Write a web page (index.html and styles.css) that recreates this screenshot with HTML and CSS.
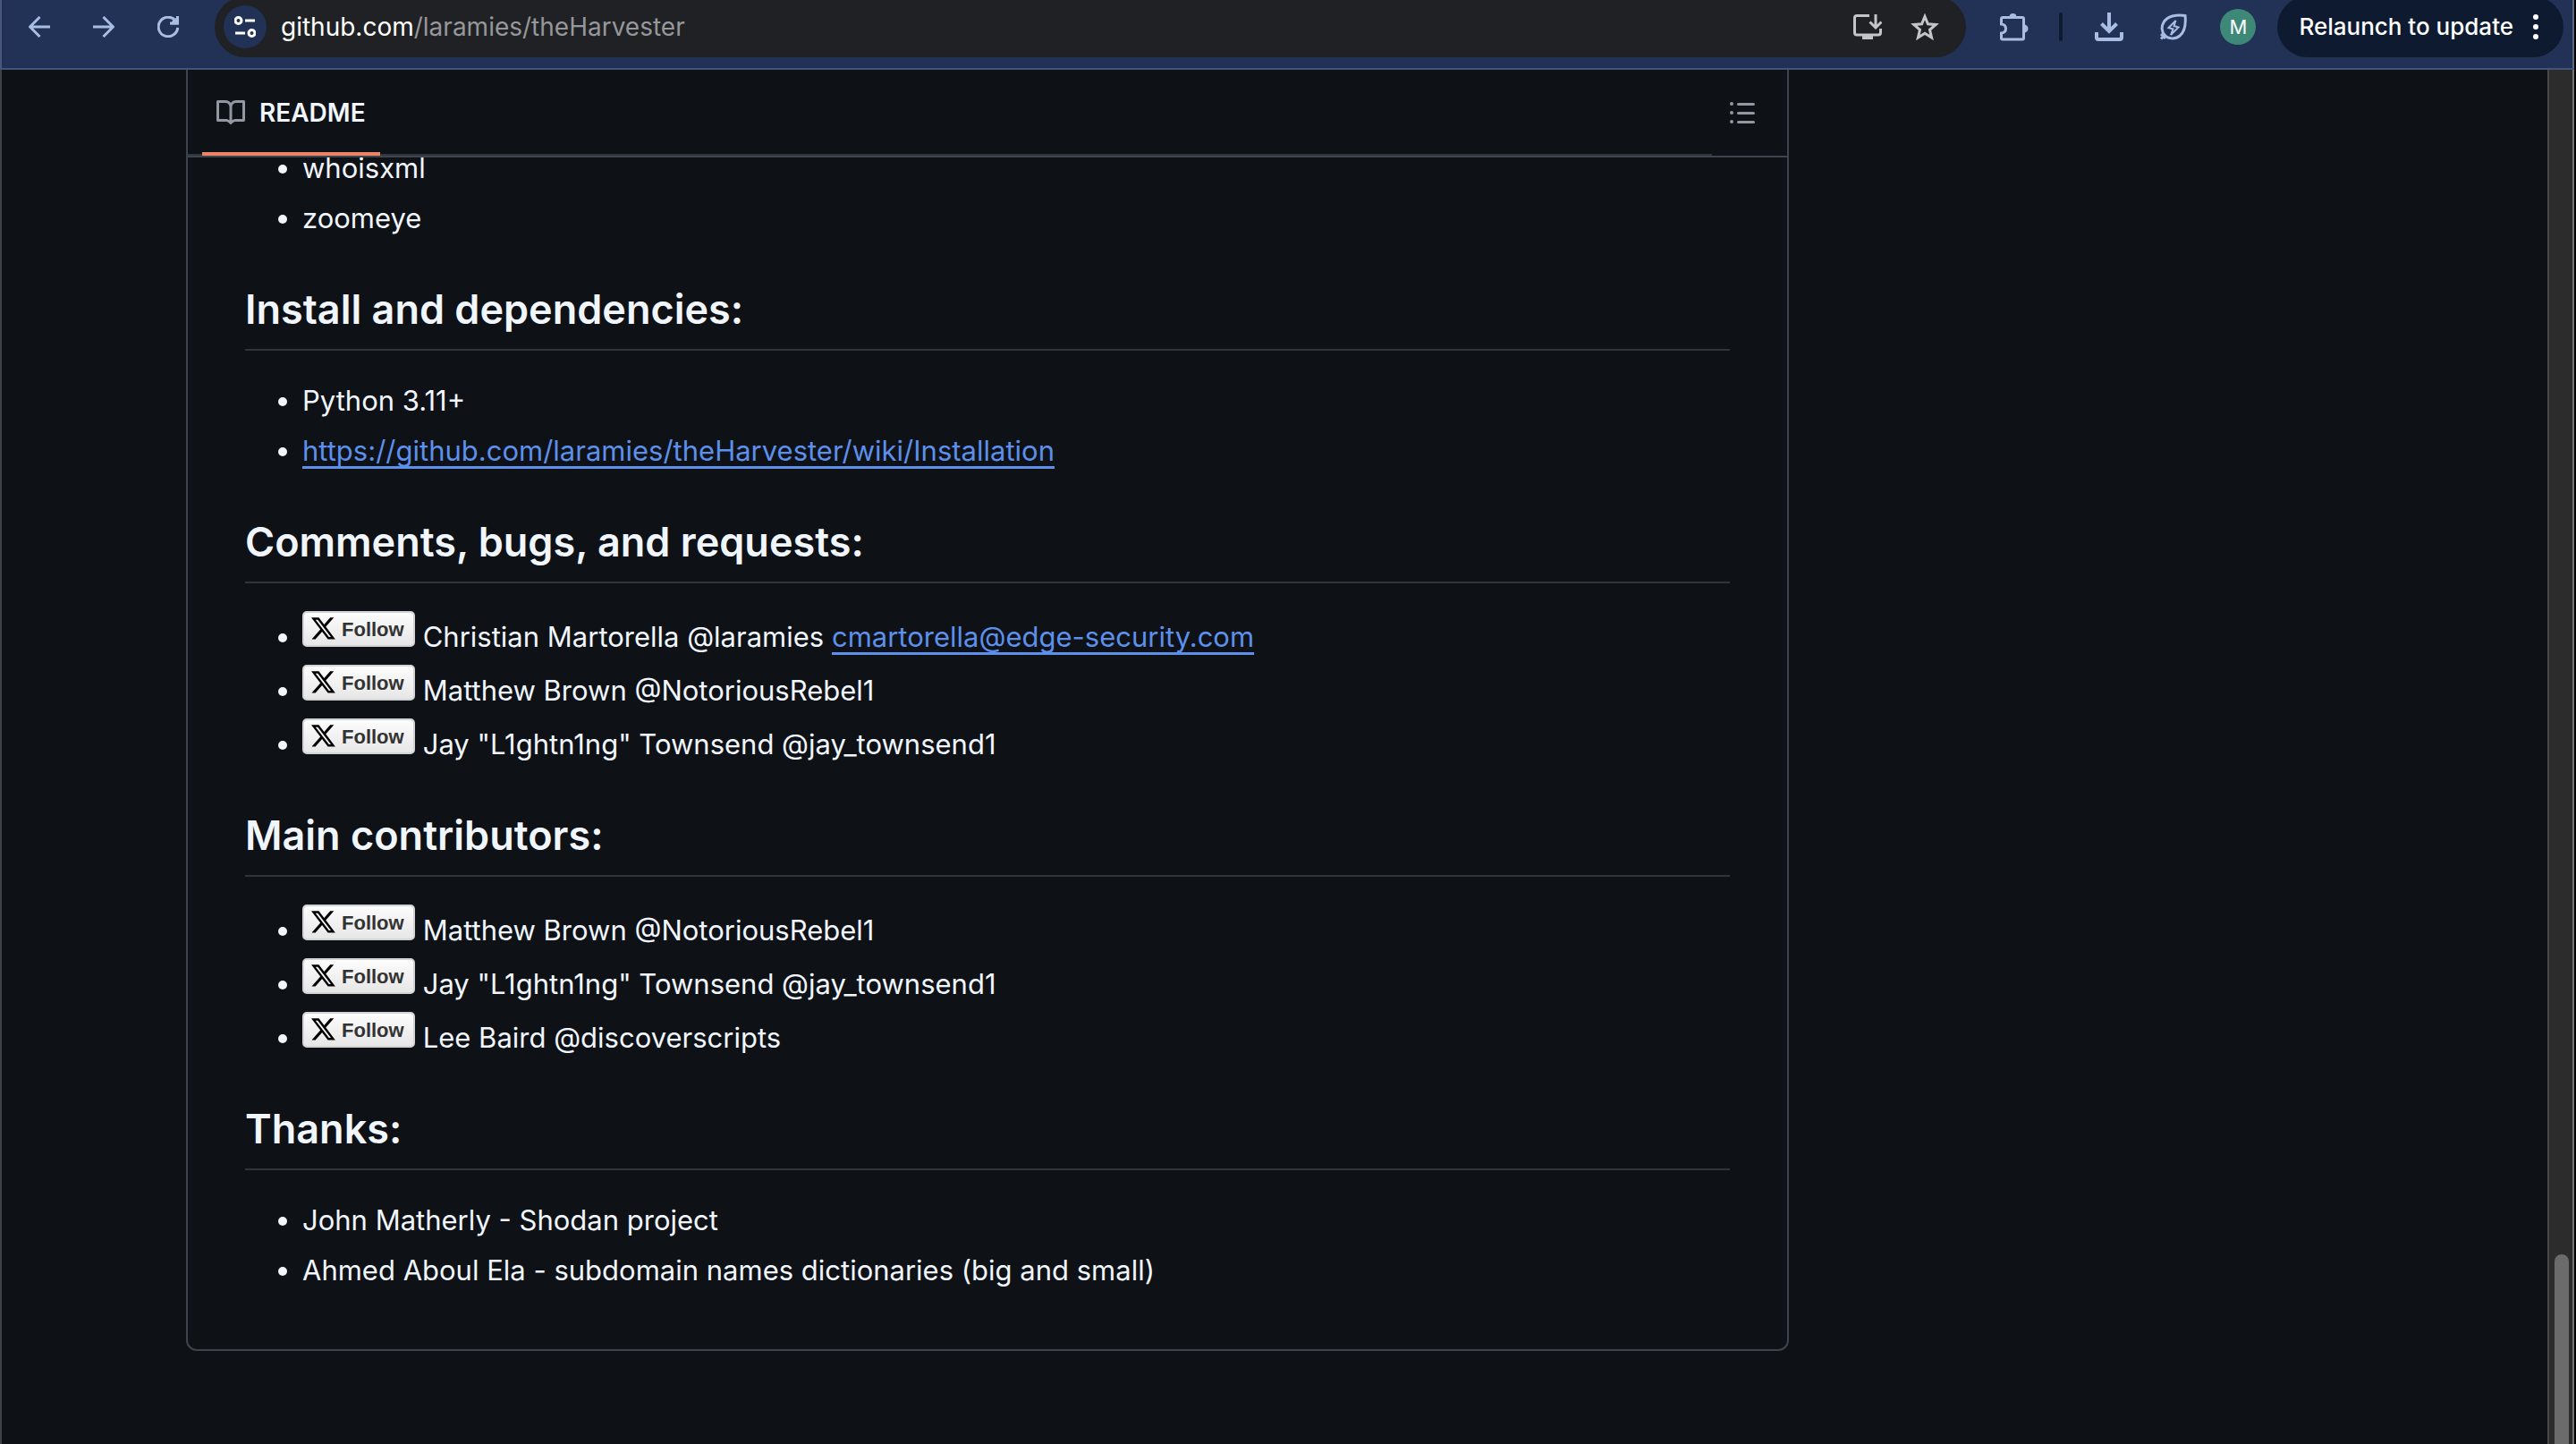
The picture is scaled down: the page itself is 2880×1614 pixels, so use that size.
FILE: index.html
```html
<!DOCTYPE html>
<html lang="en">
<head>
<meta charset="utf-8">
<title>laramies/theHarvester</title>
<link rel="stylesheet" href="styles.css">
</head>
<body>
<svg class="defs" aria-hidden="true">
  <defs>
    <linearGradient id="badge-fill" x1="0" y1="0" x2="0" y2="1">
      <stop offset="0" stop-color="#fdfdfd"/>
      <stop offset="1" stop-color="#e6e6e6"/>
    </linearGradient>
    <symbol id="follow" viewBox="0 0 126 40">
      <rect x="1" y="1" width="124" height="38" rx="4" fill="url(#badge-fill)" stroke="#d3d3d3" stroke-width="2"/>
      <path transform="translate(10 6) scale(1.12)" d="M18.901 1.153h3.68l-8.04 9.19L24 22.846h-7.406l-5.8-7.584-6.638 7.584H.474l8.6-9.83L0 1.154h7.594l5.243 6.932ZM17.61 20.644h2.039L6.486 3.24H4.298Z" fill="#000"/>
      <text x="44" y="28" class="badge-text">Follow</text>
    </symbol>
  </defs>
</svg>
<div class="window">
  <header class="toolbar">
    <nav class="history" aria-label="History">
      <button class="tool" aria-label="Back"><svg viewBox="0 0 24 24" width="24" height="24" class="line"><path d="M24 12H2M12.500 1 1.500 12l11 11"/></svg></button>
      <button class="tool" aria-label="Forward"><svg viewBox="0 0 24 24" width="24" height="24" class="line"><path d="M0 12h22M11.500 1l11 11-11 11"/></svg></button>
      <button class="tool" aria-label="Reload"><svg viewBox="0 0 24 24" width="24" height="24" class="line"><path d="M22.700 13A10.800 10.800 0 1 1 20 4.800L22.500 7.500M22.500 0v8h-8.500"/><path d="M18 6l4-3v5h-5z"/></svg></button>
    </nav>
    <div class="omnibox">
      <button class="site" aria-label="Site information"><svg viewBox="0 0 24 24" width="24" height="24" class="line"><circle cx="4.500" cy="5" r="3.500"/><path d="M12 5h11M1 19h11"/><circle cx="19.500" cy="19" r="3.500"/></svg></button>
      <span class="address"><label for="url">github.com</label><input id="url" type="text" value="/laramies/theHarvester"></span>
      <button class="tool grey" aria-label="Install app"><svg viewBox="0 0 32 32" width="32" height="32" class="line"><path d="M18 3.500H4q-2.500 0-2.500 2.500v16.500q0 2.500 2.500 2.500h24q2.500 0 2.500-2.500V18"/><path d="M10 24h12v6H10z" class="solid"/><path d="M25 2v14M18.500 10.500l6.500 6.500 6.500-6.500"/></svg></button>
      <button class="tool grey" aria-label="Bookmark"><svg viewBox="0 0 32 32" width="32" height="32" class="line"><path d="M16 4.500l3.400 8.300 8.900.7-6.800 5.800 2.100 8.700L16 23.300 8.400 28l2.100-8.700-6.800-5.800 8.900-.7z"/></svg></button>
    </div>
    <div class="actions">
      <button class="tool" aria-label="Extensions"><svg viewBox="0 0 32 32" width="32" height="32" class="line"><path d="M3.500 5.500h21.500q1.500 0 1.500 1.500v21.500q0 1.500-1.500 1.500H3q-1.500 0-1.500-1.500V23q5-.5 5-5t-5-5V7q0-1.500 2-1.500z"/><path d="M10.500 5a4 4 0 0 1 8 0zM27 13.500a4.500 4.500 0 0 1 0 9z" class="solid"/></svg></button>
      <span class="divider"></span>
      <button class="tool" aria-label="Downloads"><svg viewBox="0 0 32 32" width="32" height="32" class="line thick"><path d="M16 0v20M7.500 12.500l8.500 8.500 8.500-8.500"/><path d="M2 22v6q0 2 2 2h24q2 0 2-2v-6"/></svg></button>
      <button class="tool" aria-label="Energy saver"><svg viewBox="0 0 32 32" width="32" height="32" class="line"><path d="M29 3.500C19 2 9 4 5 11c-3 5-2 11 1 14 4 5 12 5 17 1 6-5 7-13 6-22.500zM2 29.500l5-5M2 24l5 5"/><path d="M18.500 9 10.500 17l5 1.500L13 25l8.500-8.500-5-1.500z" class="fine"/></svg></button>
      <button class="avatar" aria-label="Profile">M</button>
      <button class="relaunch">Relaunch to update<svg viewBox="0 0 6 28" width="6" height="28"><circle cx="3" cy="3" r="3"/><circle cx="3" cy="14" r="3"/><circle cx="3" cy="25" r="3"/></svg></button>
    </div>
  </header>
  <div class="viewport">
    <main class="page">
      <section class="readme">
        <header class="tabs">
          <nav class="tablist" aria-label="Repository files">
            <a class="tab" href="#readme"><svg viewBox="0 0 16 16" width="32" height="32"><path d="M0 1.750A.75.75 0 0 1 .75 1h4.253c1.227 0 2.317.59 3 1.501A3.743 3.743 0 0 1 11.006 1h4.245a.75.75 0 0 1 .75.75v10.500a.75.75 0 0 1-.75.75h-4.507a2.250 2.250 0 0 0-1.591.659l-.622.621a.75.75 0 0 1-1.060 0l-.622-.621A2.250 2.250 0 0 0 5.258 13H.75a.75.75 0 0 1-.75-.75Zm7.251 10.324.004-5.073-.002-2.253A2.250 2.250 0 0 0 5.003 2.500H1.500v9h3.757a3.750 3.750 0 0 1 1.994.574ZM8.755 4.750l-.004 7.322a3.752 3.752 0 0 1 1.992-.572H14.500v-9h-3.495a2.250 2.250 0 0 0-2.250 2.250Z"/></svg>README</a>
          </nav>
          <button class="outline" aria-label="Outline"><svg viewBox="0 0 16 16" width="32" height="32"><path d="M5.750 2.500h8.500a.75.75 0 0 1 0 1.500h-8.500a.75.75 0 0 1 0-1.500Zm0 5h8.500a.75.75 0 0 1 0 1.500h-8.500a.75.75 0 0 1 0-1.500Zm0 5h8.500a.75.75 0 0 1 0 1.500h-8.500a.75.75 0 0 1 0-1.500ZM2 14a1 1 0 1 1 0-2 1 1 0 0 1 0 2Zm1-6a1 1 0 1 1-2 0 1 1 0 0 1 2 0ZM2 4a1 1 0 1 1 0-2 1 1 0 0 1 0 2Z"/></svg></button>
        </header>
        <article class="markdown" id="readme">
          <ul>
            <li>whoisxml</li>
            <li>zoomeye</li>
          </ul>
          <h2>Install and dependencies:</h2>
          <ul>
            <li>Python 3.11+</li>
            <li><a href="#installation">https://github.com/laramies/theHarvester/wiki/Installation</a></li>
          </ul>
          <h2>Comments, bugs, and requests:</h2>
          <ul>
            <li><svg class="badge"><use href="#follow"/></svg> Christian Martorella @laramies <a href="mailto:cmartorella@edge-security.com">cmartorella@edge-security.com</a></li>
            <li><svg class="badge"><use href="#follow"/></svg> Matthew Brown @NotoriousRebel1</li>
            <li><svg class="badge"><use href="#follow"/></svg> Jay "L1ghtn1ng" Townsend @jay_townsend1</li>
          </ul>
          <h2>Main contributors:</h2>
          <ul>
            <li><svg class="badge"><use href="#follow"/></svg> Matthew Brown @NotoriousRebel1</li>
            <li><svg class="badge"><use href="#follow"/></svg> Jay "L1ghtn1ng" Townsend @jay_townsend1</li>
            <li><svg class="badge"><use href="#follow"/></svg> Lee Baird @discoverscripts</li>
          </ul>
          <h2>Thanks:</h2>
          <ul>
            <li>John Matherly - Shodan project</li>
            <li>Ahmed Aboul Ela - subdomain names dictionaries (big and small)</li>
          </ul>
        </article>
      </section>
    </main>
    <div class="scrollbar"><div class="thumb"></div></div>
  </div>
</div>
</body>
</html>
```
FILE: styles.css
```css
* { box-sizing: border-box; }

body {
  margin: 0;
  background: #0e1116;
  color: #f0f6fc;
  font-family: Inter, "Liberation Sans", sans-serif;
  font-size: 31px;
  line-height: 48px;
}

button, input {
  font: inherit;
  color: inherit;
  background: none;
  border: 0;
  padding: 0;
}

svg { fill: currentColor; }
.defs { position: absolute; width: 0; height: 0; }

.window {
  display: flex;
  flex-direction: column;
  height: 100vh;
  overflow: hidden;
  border-right: 2px solid #000;
}

/* Browser toolbar */
.toolbar {
  display: flex;
  align-items: center;
  height: 78px;
  flex: none;
  padding: 0 10px 16px 30px;
  background: #213256;
  border-bottom: 2px solid #45537a;
  border-left: 2px solid #4a5778;
  border-right: 2px solid #5a6684;
  color: #a9bce2;
}

.tool { display: flex; }
.line { fill: none; stroke: currentColor; stroke-width: 3; }
.line .solid { fill: currentColor; stroke: none; }
.line .fine { stroke-width: 2; }
.thick { stroke-width: 4; }

.history { display: flex; gap: 48px; }

.omnibox {
  display: flex;
  align-items: center;
  flex: 1;
  height: 68px;
  margin-left: 40px;
  padding: 0 30px 0 10px;
  border-radius: 34px;
  background: #202124;
}

.site {
  display: flex;
  align-items: center;
  justify-content: center;
  width: 48px;
  height: 48px;
  border-radius: 24px;
  background: #213256;
  color: #fff;
}

.address {
  display: flex;
  flex: 1;
  margin-left: 16px;
  font-size: 28px;
  color: #fff;
}
.address input { flex: 1; color: #96979a; }
.grey { color: #c4c5c7; margin-left: 32px; }

.actions { display: flex; align-items: center; margin-left: 38px; }
.divider { width: 4px; height: 32px; margin: 0 36px 0 34px; border-radius: 2px; background: #0e1a30; }
.actions .tool + .tool { margin-left: 40px; }

.avatar {
  width: 40px;
  height: 40px;
  margin: 0 24px 0 36px;
  border-radius: 20px;
  background: #3d8877;
  color: #fff;
  font-size: 22px;
  line-height: 40px;
}

.relaunch {
  display: flex;
  align-items: center;
  gap: 22px;
  height: 68px;
  padding: 0 28px 0 24px;
  border-radius: 34px;
  background: #0e1a30;
  color: #fff;
  font-size: 26px;
  font-weight: 500;
}

/* Page and scrollbar */
.viewport { display: flex; flex: 1; min-height: 0; }

.page {
  flex: 1;
  overflow: hidden;
  padding: 0 848px 0 206px;
  border-left: 2px solid #3e4145;
}

.scrollbar {
  display: flex;
  width: 30px;
  padding: 0 4px 0 6px;
  background: #2c2c2c;
  border-left: 2px solid #484848;
  border-right: 2px solid #747474;
}
.thumb {
  flex: 1;
  align-self: flex-end;
  height: 212px;
  border-radius: 8px 8px 0 0;
  background: #6b6b6b;
}

/* README box */
.readme {
  border: 2px solid #3d444d;
  border-top: 0;
  border-radius: 0 0 12px 12px;
}

.tabs {
  position: sticky;
  top: 0;
  z-index: 1;
  display: flex;
  height: 98px;
  background: #0e1116;
  border-bottom: 2px solid #3d444d;
}

.tablist {
  display: flex;
  flex: 1;
  padding-left: 16px;
  box-shadow: inset 0 -2px #2f353c;
}

.tab {
  display: flex;
  align-items: center;
  gap: 16px;
  padding: 4px 16px 0;
  border-bottom: 4px solid #ec8468;
  color: #f0f6fc;
  font-size: 28px;
  font-weight: 600;
  text-decoration: none;
}
.tab svg, .outline { color: #9198a1; }
.outline { padding: 0 34px 0 18px; }
.outline svg { display: block; }

.markdown { margin-top: -12px; padding: 0 64px 64px; }

.markdown ul { margin: 0; padding-left: 64px; }
.markdown li + li { margin-top: 8px; }

.markdown h2 {
  margin: 48px 0 32px;
  padding-bottom: 14px;
  border-bottom: 2px solid #2f353c;
  font-size: 45px;
  font-weight: 600;
  line-height: 60px;
}

.markdown a {
  color: #5c90ea;
  text-decoration: underline;
  text-decoration-thickness: 3px;
  text-decoration-skip-ink: none;
  text-underline-offset: 6px;
}

.badge { width: 126px; height: 40px; margin-top: -1px; }
.badge-text {
  font: bold 22px "Liberation Sans", Arial, sans-serif;
  fill: #333;
}
```
